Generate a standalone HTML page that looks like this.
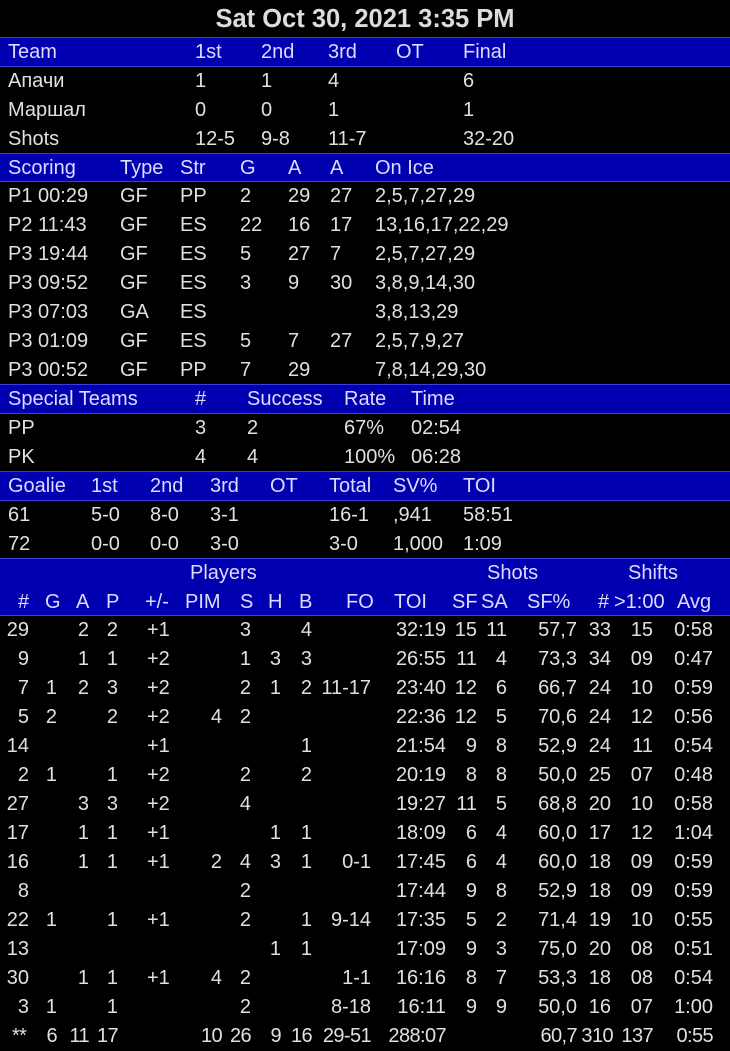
<!DOCTYPE html>
<html><head><meta charset="utf-8"><style>
*{margin:0;padding:0}
body{width:730px;height:1049px;background:#000;position:relative;overflow:hidden;font-family:"Liberation Sans",sans-serif;font-size:20px;color:#e0e0e0}
.t{position:absolute;top:0;left:0;width:730px;height:37px;line-height:38px;text-align:center;font-weight:bold;font-size:25.5px;color:#dcdcdc}
.bar{position:absolute;left:0;width:730px;background:#0000b0;border-top:1px solid #3c3cdc;border-bottom:1px solid #3c3cdc;color:#dcdcff}
.r{position:absolute;left:0;width:730px;height:29px;line-height:29px}
.r span,.bar span{position:absolute;white-space:nowrap}
.n{right:701px}.g{right:673px}.a{right:641px}.p{right:612px}.pm{left:147px}.pim{right:508px}.s{right:479px}.h{right:449px}.b{right:418px}.fo{right:359px}.toi{right:284px}.sf{right:253px}.sa{right:223px}.pc{right:153px}.sh{right:119px}.o{right:77px}.av{right:17px}
.last span{letter-spacing:-0.6px}
</style></head><body>
<div class="t">Sat Oct 30, 2021 3:35 PM</div>

<div class="bar" style="top:37px;height:28px;line-height:28px"><span style="left:8px">Team</span><span style="left:195px">1st</span><span style="left:261px">2nd</span><span style="left:328px">3rd</span><span style="left:396px">OT</span><span style="left:463px">Final</span></div>
<div class="r" style="top:67px"><span style="left:8px">Апачи</span><span style="left:195px">1</span><span style="left:261px">1</span><span style="left:328px">4</span><span style="left:463px">6</span></div>
<div class="r" style="top:96px"><span style="left:8px">Маршал</span><span style="left:195px">0</span><span style="left:261px">0</span><span style="left:328px">1</span><span style="left:463px">1</span></div>
<div class="r" style="top:125px"><span style="left:8px">Shots</span><span style="left:195px">12-5</span><span style="left:261px">9-8</span><span style="left:328px">11-7</span><span style="left:463px">32-20</span></div>

<div class="bar" style="top:153px;height:27px;line-height:28px"><span style="left:8px">Scoring</span><span style="left:120px">Type</span><span style="left:180px">Str</span><span style="left:240px">G</span><span style="left:288px">A</span><span style="left:330px">A</span><span style="left:375px">On Ice</span></div>
<div class="r" style="top:182px"><span style="left:8px">P1 00:29</span><span style="left:120px">GF</span><span style="left:180px">PP</span><span style="left:240px">2</span><span style="left:288px">29</span><span style="left:330px">27</span><span style="left:375px">2,5,7,27,29</span></div>
<div class="r" style="top:211px"><span style="left:8px">P2 11:43</span><span style="left:120px">GF</span><span style="left:180px">ES</span><span style="left:240px">22</span><span style="left:288px">16</span><span style="left:330px">17</span><span style="left:375px">13,16,17,22,29</span></div>
<div class="r" style="top:240px"><span style="left:8px">P3 19:44</span><span style="left:120px">GF</span><span style="left:180px">ES</span><span style="left:240px">5</span><span style="left:288px">27</span><span style="left:330px">7</span><span style="left:375px">2,5,7,27,29</span></div>
<div class="r" style="top:269px"><span style="left:8px">P3 09:52</span><span style="left:120px">GF</span><span style="left:180px">ES</span><span style="left:240px">3</span><span style="left:288px">9</span><span style="left:330px">30</span><span style="left:375px">3,8,9,14,30</span></div>
<div class="r" style="top:298px"><span style="left:8px">P3 07:03</span><span style="left:120px">GA</span><span style="left:180px">ES</span><span style="left:375px">3,8,13,29</span></div>
<div class="r" style="top:327px"><span style="left:8px">P3 01:09</span><span style="left:120px">GF</span><span style="left:180px">ES</span><span style="left:240px">5</span><span style="left:288px">7</span><span style="left:330px">27</span><span style="left:375px">2,5,7,9,27</span></div>
<div class="r" style="top:356px"><span style="left:8px">P3 00:52</span><span style="left:120px">GF</span><span style="left:180px">PP</span><span style="left:240px">7</span><span style="left:288px">29</span><span style="left:375px">7,8,14,29,30</span></div>

<div class="bar" style="top:384px;height:28px;line-height:29px"><span style="left:8px">Special Teams</span><span style="left:195px">#</span><span style="left:247px">Success</span><span style="left:344px">Rate</span><span style="left:411px">Time</span></div>
<div class="r" style="top:414px"><span style="left:8px">PP</span><span style="left:195px">3</span><span style="left:247px">2</span><span style="left:344px">67%</span><span style="left:411px">02:54</span></div>
<div class="r" style="top:443px"><span style="left:8px">PK</span><span style="left:195px">4</span><span style="left:247px">4</span><span style="left:344px">100%</span><span style="left:411px">06:28</span></div>

<div class="bar" style="top:471px;height:28px;line-height:29px"><span style="left:8px">Goalie</span><span style="left:91px">1st</span><span style="left:150px">2nd</span><span style="left:210px">3rd</span><span style="left:270px">OT</span><span style="left:329px">Total</span><span style="left:393px">SV%</span><span style="left:463px">TOI</span></div>
<div class="r" style="top:501px"><span style="left:8px">61</span><span style="left:91px">5-0</span><span style="left:150px">8-0</span><span style="left:210px">3-1</span><span style="left:329px">16-1</span><span style="left:393px">,941</span><span style="left:463px">58:51</span></div>
<div class="r" style="top:530px"><span style="left:8px">72</span><span style="left:91px">0-0</span><span style="left:150px">0-0</span><span style="left:210px">3-0</span><span style="left:329px">3-0</span><span style="left:393px">1,000</span><span style="left:463px">1:09</span></div>

<div class="bar" style="top:558px;height:56px;line-height:29px">
<span style="left:190px;top:0">Players</span><span style="left:487px;top:0">Shots</span><span style="left:628px;top:0">Shifts</span>
<span style="left:18px;top:29px">#</span><span style="left:45px;top:29px">G</span><span style="left:76px;top:29px">A</span><span style="left:106px;top:29px">P</span><span style="left:145px;top:29px">+/-</span><span style="left:185px;top:29px">PIM</span><span style="left:240px;top:29px">S</span><span style="left:268px;top:29px">H</span><span style="left:299px;top:29px">B</span><span style="left:346px;top:29px">FO</span><span style="left:394px;top:29px">TOI</span><span style="left:452px;top:29px">SF</span><span style="left:481px;top:29px">SA</span><span style="left:527px;top:29px">SF%</span><span style="left:598px;top:29px">#</span><span style="left:614px;top:29px">&gt;1:00</span><span style="left:677px;top:29px">Avg</span>
</div>

<div class="r" style="top:616px"><span class="n">29</span><span class="a">2</span><span class="p">2</span><span class="pm">+1</span><span class="s">3</span><span class="b">4</span><span class="toi">32:19</span><span class="sf">15</span><span class="sa">11</span><span class="pc">57,7</span><span class="sh">33</span><span class="o">15</span><span class="av">0:58</span></div>
<div class="r" style="top:645px"><span class="n">9</span><span class="a">1</span><span class="p">1</span><span class="pm">+2</span><span class="s">1</span><span class="h">3</span><span class="b">3</span><span class="toi">26:55</span><span class="sf">11</span><span class="sa">4</span><span class="pc">73,3</span><span class="sh">34</span><span class="o">09</span><span class="av">0:47</span></div>
<div class="r" style="top:674px"><span class="n">7</span><span class="g">1</span><span class="a">2</span><span class="p">3</span><span class="pm">+2</span><span class="s">2</span><span class="h">1</span><span class="b">2</span><span class="fo">11-17</span><span class="toi">23:40</span><span class="sf">12</span><span class="sa">6</span><span class="pc">66,7</span><span class="sh">24</span><span class="o">10</span><span class="av">0:59</span></div>
<div class="r" style="top:703px"><span class="n">5</span><span class="g">2</span><span class="p">2</span><span class="pm">+2</span><span class="pim">4</span><span class="s">2</span><span class="toi">22:36</span><span class="sf">12</span><span class="sa">5</span><span class="pc">70,6</span><span class="sh">24</span><span class="o">12</span><span class="av">0:56</span></div>
<div class="r" style="top:732px"><span class="n">14</span><span class="pm">+1</span><span class="b">1</span><span class="toi">21:54</span><span class="sf">9</span><span class="sa">8</span><span class="pc">52,9</span><span class="sh">24</span><span class="o">11</span><span class="av">0:54</span></div>
<div class="r" style="top:761px"><span class="n">2</span><span class="g">1</span><span class="p">1</span><span class="pm">+2</span><span class="s">2</span><span class="b">2</span><span class="toi">20:19</span><span class="sf">8</span><span class="sa">8</span><span class="pc">50,0</span><span class="sh">25</span><span class="o">07</span><span class="av">0:48</span></div>
<div class="r" style="top:790px"><span class="n">27</span><span class="a">3</span><span class="p">3</span><span class="pm">+2</span><span class="s">4</span><span class="toi">19:27</span><span class="sf">11</span><span class="sa">5</span><span class="pc">68,8</span><span class="sh">20</span><span class="o">10</span><span class="av">0:58</span></div>
<div class="r" style="top:819px"><span class="n">17</span><span class="a">1</span><span class="p">1</span><span class="pm">+1</span><span class="h">1</span><span class="b">1</span><span class="toi">18:09</span><span class="sf">6</span><span class="sa">4</span><span class="pc">60,0</span><span class="sh">17</span><span class="o">12</span><span class="av">1:04</span></div>
<div class="r" style="top:848px"><span class="n">16</span><span class="a">1</span><span class="p">1</span><span class="pm">+1</span><span class="pim">2</span><span class="s">4</span><span class="h">3</span><span class="b">1</span><span class="fo">0-1</span><span class="toi">17:45</span><span class="sf">6</span><span class="sa">4</span><span class="pc">60,0</span><span class="sh">18</span><span class="o">09</span><span class="av">0:59</span></div>
<div class="r" style="top:877px"><span class="n">8</span><span class="s">2</span><span class="toi">17:44</span><span class="sf">9</span><span class="sa">8</span><span class="pc">52,9</span><span class="sh">18</span><span class="o">09</span><span class="av">0:59</span></div>
<div class="r" style="top:906px"><span class="n">22</span><span class="g">1</span><span class="p">1</span><span class="pm">+1</span><span class="s">2</span><span class="b">1</span><span class="fo">9-14</span><span class="toi">17:35</span><span class="sf">5</span><span class="sa">2</span><span class="pc">71,4</span><span class="sh">19</span><span class="o">10</span><span class="av">0:55</span></div>
<div class="r" style="top:935px"><span class="n">13</span><span class="h">1</span><span class="b">1</span><span class="toi">17:09</span><span class="sf">9</span><span class="sa">3</span><span class="pc">75,0</span><span class="sh">20</span><span class="o">08</span><span class="av">0:51</span></div>
<div class="r" style="top:964px"><span class="n">30</span><span class="a">1</span><span class="p">1</span><span class="pm">+1</span><span class="pim">4</span><span class="s">2</span><span class="fo">1-1</span><span class="toi">16:16</span><span class="sf">8</span><span class="sa">7</span><span class="pc">53,3</span><span class="sh">18</span><span class="o">08</span><span class="av">0:54</span></div>
<div class="r" style="top:993px"><span class="n">3</span><span class="g">1</span><span class="p">1</span><span class="s">2</span><span class="fo">8-18</span><span class="toi">16:11</span><span class="sf">9</span><span class="sa">9</span><span class="pc">50,0</span><span class="sh">16</span><span class="o">07</span><span class="av">1:00</span></div>
<div class="r last" style="top:1022px"><span style="left:12px">**</span><span class="g">6</span><span class="a">11</span><span class="p">17</span><span class="pim">10</span><span class="s">26</span><span class="h">9</span><span class="b">16</span><span class="fo">29-51</span><span class="toi">288:07</span><span class="pc">60,7</span><span class="sh" style="right:117px">310</span><span class="o">137</span><span class="av">0:55</span></div>
</body></html>
